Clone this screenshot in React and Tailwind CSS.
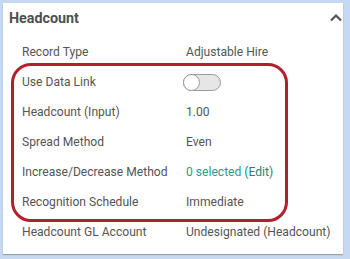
const rows = [
  { label: "Record Type", value: "Adjustable Hire" },
  { label: "Use Data Link", toggle: true },
  { label: "Headcount (Input)", value: "1.00" },
  { label: "Spread Method", value: "Even" },
  { label: "Increase/Decrease Method", edit: true },
  { label: "Recognition Schedule", value: "Immediate" },
  { label: "Headcount GL Account", value: "Undesignated (Headcount)" },
];

export default function App() {
  return (
    <div className="w-[350px] h-[259px] bg-[#c6d9f0] pt-[3px] pl-[3px] overflow-hidden">
      <div className="relative w-[340px] h-[251px] bg-white shadow-[0_1px_1px_rgba(0,0,0,0.25)] font-['Roboto',sans-serif] text-[#555]">
        {/* Section header */}
        <div className="h-[30px] flex items-center justify-between pl-[6px] pr-[1px] pt-[1px]">
          <span className="text-[14.3px] font-bold text-[#4f4f4f]">Headcount</span>
          <svg width="12" height="8" viewBox="0 0 12 8" className="text-[#555] mb-[1px]">
            <path d="M1 6.5 L6 1.5 L11 6.5" fill="none" stroke="currentColor" strokeWidth="2.2" />
          </svg>
        </div>

        {/* Field rows */}
        <div className="pt-[4px]">
          {rows.map((r) => (
            <div key={r.label} className="h-[30px] flex items-center text-[12.1px]">
              <span className="pl-[19px] w-[183px] shrink-0">{r.label}</span>
              {r.toggle ? (
                <div className="w-[38px] h-[17px] rounded-full bg-[#e6e6e6] border border-[#9a9a9a] relative -ml-[3px]">
                  <div className="absolute -left-px -top-px w-[17px] h-[17px] rounded-full bg-white border border-[#9a9a9a]" />
                </div>
              ) : r.edit ? (
                <span className="text-[#2a9d8f]">
                  0 selected <span className="text-[#17867a]">(Edit)</span>
                </span>
              ) : (
                <span>{r.value}</span>
              )}
            </div>
          ))}
        </div>

        {/* Annotation highlight */}
        <div className="absolute left-[8px] top-[60px] w-[277px] h-[159px] border-[3px] border-[#b3202b] rounded-[20px] pointer-events-none" />
      </div>
    </div>
  );
}
